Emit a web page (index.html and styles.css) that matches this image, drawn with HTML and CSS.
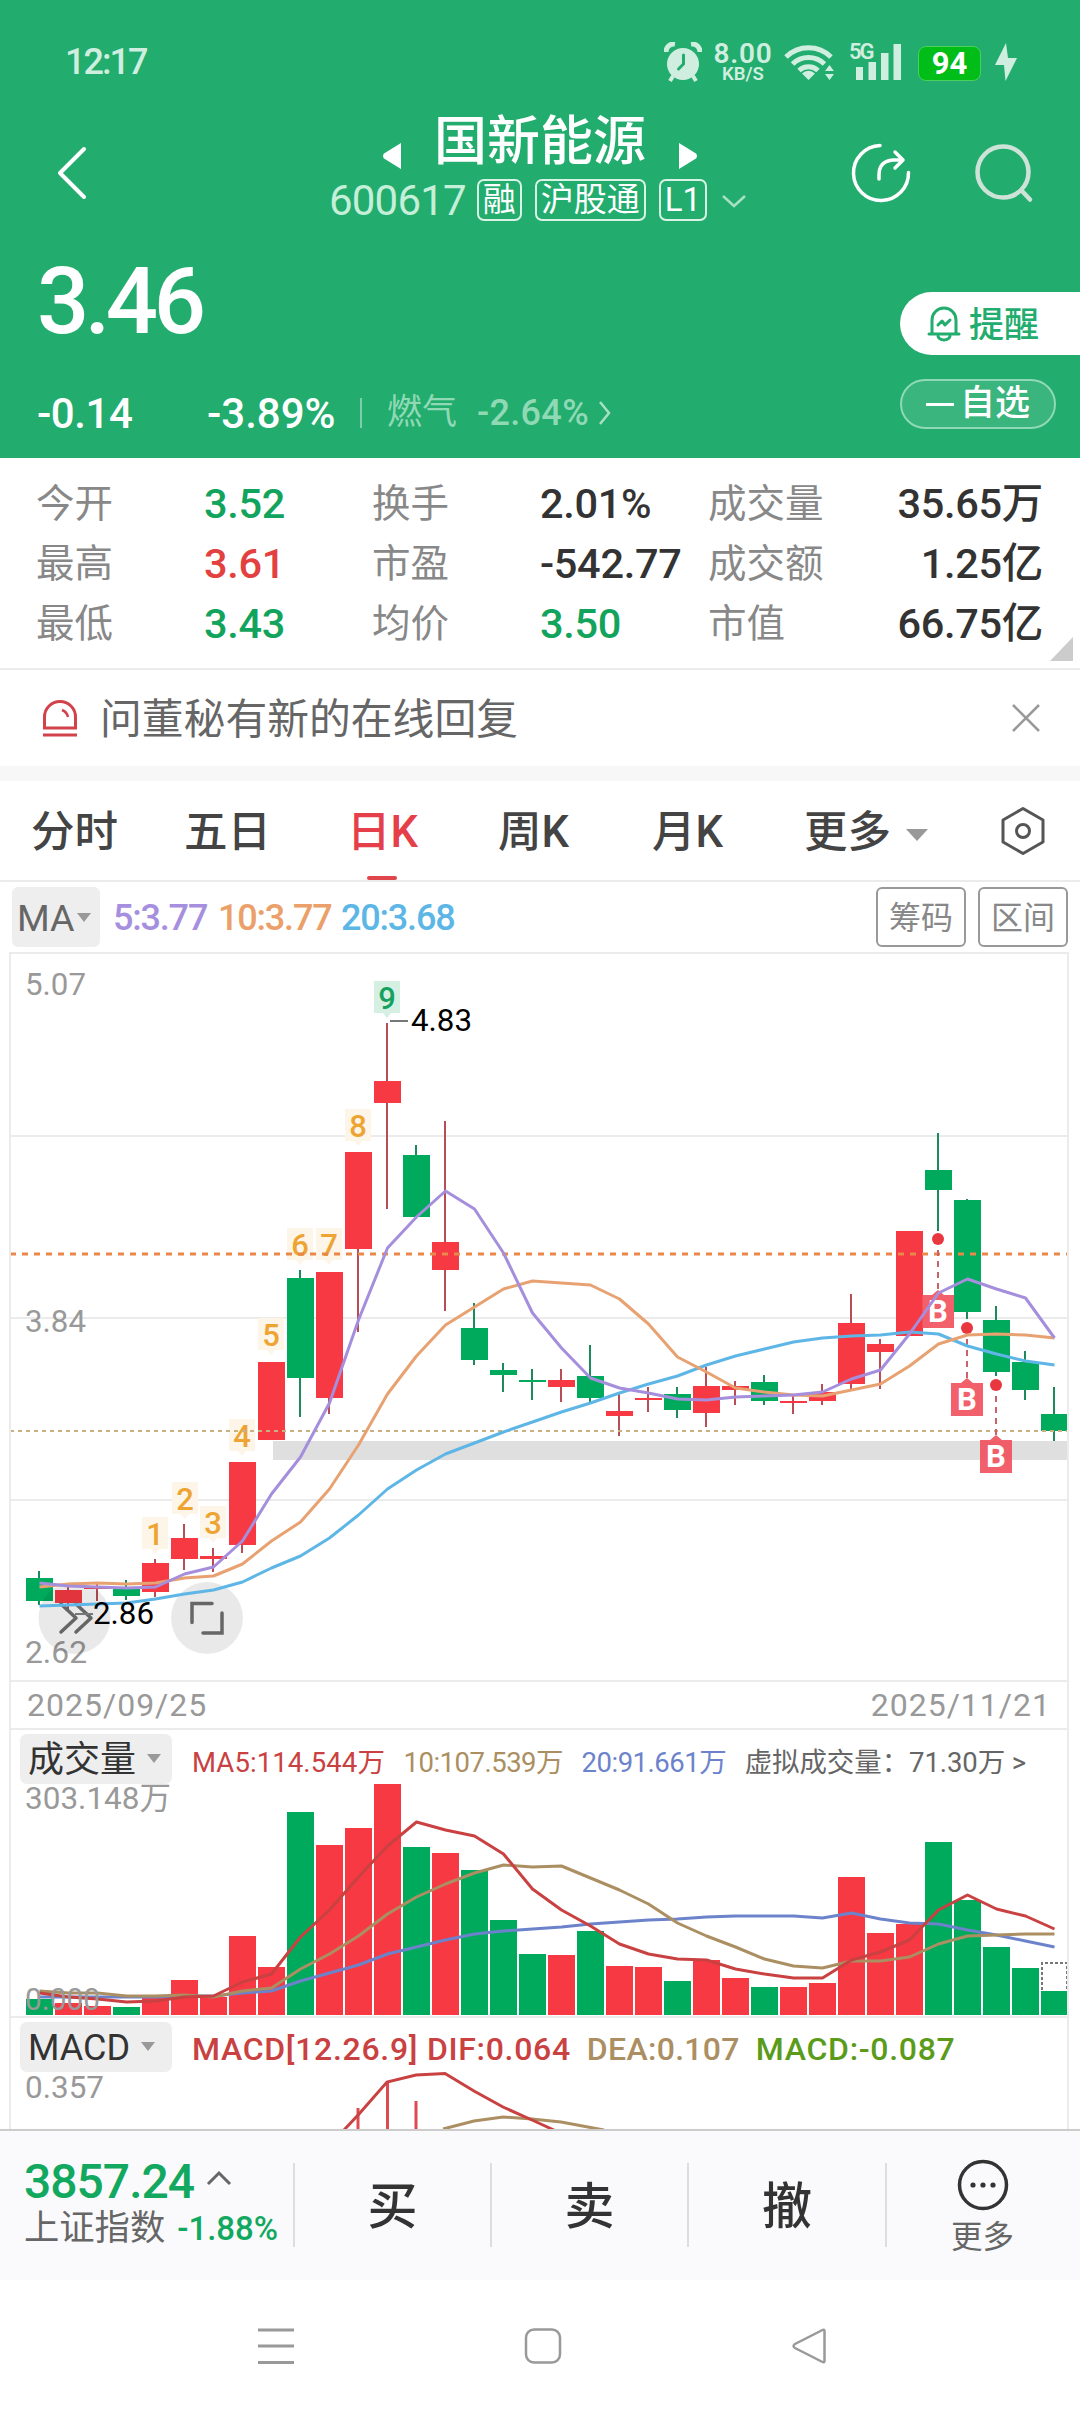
FILE: index.html
```html
<!DOCTYPE html>
<html lang="zh-CN">
<head>
    <meta charset="UTF-8">
    <meta name="viewport" content="width=device-width, initial-scale=1.0">
    <title>国新能源 600617</title>
    <link rel="stylesheet" href="styles.css">
</head>
<body>
    <header class="header">
        <div class="status-bar">
            <span class="clock">12:17</span>
            <div class="status-icons">
                <svg class="ic-alarm" width="38" height="40" viewBox="0 0 38 40">
                    <circle cx="19" cy="22" r="16" fill="#d0eedf"/>
                    <path d="M2 10a8 8 0 0 1 9-8M27 2a8 8 0 0 1 9 8" fill="none" stroke="#d0eedf" stroke-width="5"/>
                    <path d="M9 34l-3 5M29 34l3 5" stroke="#d0eedf" stroke-width="4"/>
                    <path d="M19.500 13v9l-5 5" fill="none" stroke="#22ac6e" stroke-width="3" stroke-linecap="round"/>
                </svg>
                <div class="net-speed"><b>8.00</b><span>KB/S</span></div>
                <svg class="ic-wifi" width="52" height="38" viewBox="0 0 52 38">
                    <g fill="none" stroke="#d0eedf" stroke-width="5">
                        <path d="M2 14a32 32 0 0 1 45 0"/>
                        <path d="M8.500 21a23 23 0 0 1 32 0"/>
                        <path d="M15 27.500a14 14 0 0 1 19 0"/>
                    </g>
                    <path d="M24.500 37l-6.500-6.500a9 9 0 0 1 13 0z" fill="#d0eedf"/>
                    <path d="M41 28l4.500-6 4.500 6zM41 31l4.500 6 4.500-6z" fill="#d0eedf"/>
                </svg>
                <div class="signal">
                    <span>5G</span>
                    <svg width="46" height="38" viewBox="0 0 46 38">
                        <path d="M1 24h7v13h-7zM13.500 19h7.500v18h-7.500zM26 10h7.500v27h-7.500zM38.500 1h7.500v36h-7.500z" fill="#d0eedf"/>
                    </svg>
                </div>
                <span class="battery">94</span>
                <svg class="ic-bolt" width="22" height="40" viewBox="0 0 22 40"><path d="M11 1L0 23h9l1.500 16L22 16h-9z" fill="#d0eedf"/></svg>
            </div>
        </div>

        <div class="title-bar">
            <svg class="back" width="34" height="56" viewBox="0 0 34 56"><path d="M29 4L5 28l24 24" fill="none" stroke="#fff" stroke-width="4" stroke-linecap="round" stroke-linejoin="round"/></svg>
            <div class="stock">
                <div class="stock-name">
                    <svg width="20" height="28" viewBox="0 0 20 28"><path d="M19 1v26L2 16.500q-2-2.500 0-5z" fill="#fff"/></svg>
                    <h1>国新能源</h1>
                    <svg width="20" height="28" viewBox="0 0 20 28"><path d="M1 1v26l17-10.500q2-2.500 0-5z" fill="#fff"/></svg>
                </div>
                <div class="stock-code">
                    <span class="code">600617</span>
                    <span class="tag">融</span>
                    <span class="tag">沪股通</span>
                    <span class="tag">L1</span>
                    <svg width="26" height="14" viewBox="0 0 26 14"><path d="M2 2l11 10L24 2" fill="none" stroke="#a9e0c4" stroke-width="2.500"/></svg>
                </div>
            </div>
            <div class="title-actions">
                <svg width="64" height="64" viewBox="0 0 64 64" fill="none" stroke="#fff" stroke-width="3.500" stroke-linecap="round" stroke-linejoin="round">
                    <path d="M31 4.500a27.500 27.500 0 1 0 28.500 27"/>
                    <path d="M30 38v-4q0-14 14-15h9M46 11l8 8-8 8"/>
                </svg>
                <svg width="64" height="64" viewBox="0 0 64 64" fill="none" stroke="#cde3d7" stroke-width="4.500" stroke-linecap="round">
                    <circle cx="30" cy="31" r="25.500"/>
                    <path d="M49 50l8 8.500"/>
                </svg>
            </div>
        </div>

        <div class="quote">
            <div class="quote-main">
                <div class="price">3.46</div>
                <div class="change">
                    <span class="diff">-0.14</span>
                    <span class="pct">-3.89%</span>
                    <span class="sector">燃气</span>
                    <span class="sector-pct">-2.64%</span>
                    <svg width="14" height="26" viewBox="0 0 14 26"><path d="M2 2l9 11-9 11" fill="none" stroke="#a9e0c4" stroke-width="2.500"/></svg>
                </div>
            </div>
            <div class="quote-actions">
                <button class="remind">
                    <svg width="34" height="36" viewBox="0 0 34 36" fill="none" stroke="#22ac6e" stroke-width="3" stroke-linejoin="round" stroke-linecap="round">
                        <path d="M5 27V14a12 12 0 0 1 24 0v13M2 28h30"/>
                        <path d="M11 30a6 4 0 0 0 12 0" />
                        <path d="M11 19l4-4 3 4 5-5"/>
                    </svg>
                    <span>提醒</span>
                </button>
                <button class="watch"><i></i><span>自选</span></button>
            </div>
        </div>
    </header>

    <section class="stats">
        <span>今开</span><b class="down">3.52</b><span>换手</span><b>2.01%</b><span>成交量</span><b class="end">35.65万</b>
        <span>最高</span><b class="up">3.61</b><span>市盈</span><b>-542.77</b><span>成交额</span><b class="end">1.25亿</b>
        <span>最低</span><b class="down">3.43</b><span>均价</span><b class="down">3.50</b><span>市值</span><b class="end">66.75亿</b>
        <i class="corner"></i>
    </section>

    <section class="notice">
        <svg width="38" height="38" viewBox="0 0 38 38" fill="none" stroke="#d2424a" stroke-width="3">
            <path d="M3.500 29V18a15.500 15.500 0 0 1 31 0v11zM2 36h34"/>
            <path d="M21 11q5 2 6 7" stroke-width="2.500"/>
        </svg>
        <p>问董秘有新的在线回复</p>
        <svg width="30" height="30" viewBox="0 0 30 30"><path d="M2 2l26 26M28 2L2 28" stroke="#999" stroke-width="2.500"/></svg>
    </section>

    <nav class="tabs">
        <span>分时</span>
        <span>五日</span>
        <span class="active">日K</span>
        <span>周K</span>
        <span>月K</span>
        <span>更多<i class="arrow"></i></span>
        <svg width="46" height="50" viewBox="0 0 46 50" fill="none" stroke="#555" stroke-width="3" stroke-linejoin="round">
            <path d="M23 2.500L43 14v22L23 47.500 3 36V14z"/>
            <circle cx="23" cy="25" r="6.500"/>
        </svg>
    </nav>

    <section class="ma-bar">
        <span class="ma-chip">MA<i class="arrow small"></i></span>
        <span class="ma5">5:3.77</span>
        <span class="ma10">10:3.77</span>
        <span class="ma20">20:3.68</span>
        <div class="ma-buttons">
            <button>筹码</button>
            <button>区间</button>
        </div>
    </section>

    <main class="charts">
        <svg id="kline" class="kline" viewBox="11 954 1056 726"></svg>
        <div class="dates"><span>2025/09/25</span><span>2025/11/21</span></div>

        <div class="pane-head">
            <span class="chip">成交量<i class="arrow small"></i></span>
            <div class="legend">
                <span class="red">MA5:114.544万</span>
                <span class="tan">10:107.539万</span>
                <span class="blue">20:91.661万</span>
                <span class="gray">虚拟成交量：71.30万 &gt;</span>
            </div>
        </div>
        <svg id="volume" class="volume" viewBox="11 1784 1056 232"></svg>

        <div class="pane-head">
            <span class="chip">MACD<i class="arrow small"></i></span>
            <div class="legend macd-legend">
                <span class="red">MACD[12.26.9] DIF:0.064</span>
                <span class="tan">DEA:0.107</span>
                <span class="green">MACD:-0.087</span>
            </div>
        </div>
        <svg id="macd" class="macd" viewBox="11 2072 1056 57"></svg>
    </main>

    <footer class="trade-bar">
        <div class="index">
            <div class="index-value">3857.24<svg width="26" height="16" viewBox="0 0 26 16"><path d="M2 14L13 3l11 11" fill="none" stroke="#666" stroke-width="3"/></svg></div>
            <div class="index-name">上证指数<b>-1.88%</b></div>
        </div>
        <div class="trade">买</div>
        <div class="trade">卖</div>
        <div class="trade">撤</div>
        <div class="trade more">
            <svg width="52" height="52" viewBox="0 0 52 52">
                <circle cx="26" cy="26" r="23.500" fill="none" stroke="#333" stroke-width="3.500"/>
                <circle cx="16" cy="26" r="2.600" fill="#333"/><circle cx="26" cy="26" r="2.600" fill="#333"/><circle cx="36" cy="26" r="2.600" fill="#333"/>
            </svg>
            更多
        </div>
    </footer>

    <div class="nav-bar">
        <svg width="38" height="38" viewBox="0 0 38 38"><path d="M1 3h36M1 19h36M1 35.500h36" stroke="#999" stroke-width="3"/></svg>
        <svg width="38" height="38" viewBox="0 0 38 38"><rect x="2" y="2.500" width="34" height="33" rx="8" fill="none" stroke="#999" stroke-width="2.500"/></svg>
        <svg width="38" height="38" viewBox="0 0 38 38"><path d="M33.500 4v30q0 2-2 1L4 21q-3-2 0-4L31.500 3q2-1 2 1z" fill="none" stroke="#999" stroke-width="2.500"/></svg>
    </div>

    <script src="chart.js"></script>
</body>
</html>
```
FILE: styles.css
```css
* {
    margin: 0;
    padding: 0;
    box-sizing: border-box;
}

body {
    width: 1080px;
    height: 2412px;
    overflow: hidden;
    background: #fff;
    color: #333;
    font-family: Roboto, "Noto Sans CJK SC", sans-serif;
}

svg {
    display: block;
    flex: none;
}

button {
    font-family: inherit;
    border: none;
    background: none;
}

i {
    font-style: normal;
}

/* header */
.header {
    height: 458px;
    background: #22ac6e;
    color: #fff;
}

.status-bar {
    height: 104px;
    padding: 42px 63px 0 65px;
    display: flex;
    justify-content: space-between;
    align-items: flex-start;
    color: #d0eedf;
}

.clock {
    font-size: 36px;
    font-weight: 500;
    line-height: 40px;
    letter-spacing: -2px;
}

.status-icons {
    display: flex;
    align-items: flex-start;
}

.net-speed {
    width: 60px;
    margin: 0 11px 0 11px;
    display: flex;
    flex-direction: column;
    align-items: center;
}

.net-speed b {
    font-size: 28px;
    font-weight: 600;
    line-height: 24px;
    letter-spacing: 0.8px;
}

.net-speed span {
    font-size: 18.500px;
    font-weight: 600;
    line-height: 17px;
}

.ic-wifi {
    margin-top: 1px;
}

.signal {
    position: relative;
    width: 46px;
    margin: 1px 17px 0 19px;
}

.signal span {
    position: absolute;
    left: -6px;
    top: -2px;
    font-size: 22px;
    font-weight: 600;
    line-height: 22px;
    letter-spacing: -2px;
}

.battery {
    width: 63px;
    height: 35px;
    margin: 4px 14px 0 0;
    border: 1px solid #4bd05c;
    border-radius: 8px;
    background: #00bd18;
    color: #fff;
    font-size: 31px;
    font-weight: 700;
    line-height: 34px;
    text-align: center;
}

.title-bar {
    height: 136px;
    display: grid;
    grid-template-columns: 300px 1fr 268px;
}

.back {
    margin: 41px 0 0 55px;
}

.stock-name {
    height: 72px;
    display: flex;
    justify-content: center;
    align-items: center;
    gap: 32px;
    margin-right: 32px;
}

.stock-name h1 {
    font-size: 53px;
    font-weight: 500;
    line-height: 72px;
    padding-top: 4px;
}

.stock-name svg {
    margin-top: 32px;
}

.stock-code {
    height: 48px;
    display: flex;
    align-items: center;
    padding-left: 29px;
    gap: 13px;
}

.code {
    font-size: 42px;
    line-height: 48px;
    letter-spacing: -0.8px;
    color: #c5efd8;
    margin-right: -2px;
    padding-top: 2px;
}

.tag {
    height: 42px;
    padding: 0 4px;
    min-width: 45px;
    border: 2px solid #d9f3e6;
    border-radius: 7px;
    font-size: 33px;
    line-height: 37px;
    text-align: center;
}

.stock-code svg {
    margin: 2px 0 0 1px;
}

.title-actions {
    display: flex;
    gap: 60px;
    padding: 37px 0 0 37px;
}

.quote {
    height: 218px;
    display: flex;
    justify-content: space-between;
}

.quote-main {
    padding-left: 37px;
}

.price {
    height: 141px;
    font-size: 92px;
    font-weight: 500;
    line-height: 124px;
    letter-spacing: -4.500px;
}

.change {
    display: flex;
    align-items: center;
    height: 64px;
    font-size: 42px;
}

.diff {
    width: 170px;
    font-weight: 500;
    letter-spacing: -0.4px;
}

.pct {
    width: 153px;
    font-weight: 500;
}

.sector {
    padding-left: 25px;
    border-left: 2px solid #7fceab;
    line-height: 30px;
    font-size: 35px;
    color: #90d9b5;
}

.sector-pct {
    width: 121px;
    margin-left: 20px;
    font-size: 36px;
    font-weight: 500;
    letter-spacing: 0.3px;
    color: #90d9b5;
}

.quote-actions {
    width: 180px;
    padding-top: 52px;
}

.remind {
    width: 180px;
    height: 63px;
    padding-left: 27px;
    display: flex;
    align-items: center;
    gap: 8px;
    border-radius: 32px 0 0 32px;
    background: #fff;
    color: #22ac6e;
    font-size: 35px;
    font-weight: 500;
}

.remind span {
    padding-bottom: 4px;
}

.watch {
    width: 156px;
    height: 50px;
    margin-top: 24px;
    display: flex;
    align-items: center;
    justify-content: center;
    gap: 6px;
    border: 2px solid #8fd9b6;
    border-radius: 25px;
    background: rgba(255, 255, 255, 0.11);
    color: #fff;
    font-size: 35px;
    font-weight: 500;
}

.watch span {
    line-height: 42px;
    padding-bottom: 1px;
}

.watch i {
    width: 28px;
    height: 3px;
    background: #fff;
}

/* stats */
.stats {
    position: relative;
    height: 212px;
    padding: 16px 37px 0 36px;
    display: grid;
    grid-template-columns: 168px 168px 168px 168px 119px 1fr;
    grid-auto-rows: 60px;
    align-content: start;
    border-bottom: 2px solid #ebebeb;
    font-size: 38.500px;
    line-height: 60px;
    color: #888;
    white-space: nowrap;
}

.stats b {
    font-size: 41.500px;
    font-weight: 500;
    letter-spacing: -0.3px;
    color: #333;
}

.stats .up {
    color: #e34040;
}

.stats .down {
    color: #12a35c;
}

.stats .end {
    text-align: right;
}

.corner {
    position: absolute;
    right: 7px;
    bottom: 7px;
    border-left: 23px solid transparent;
    border-bottom: 24px solid #ccc;
}

/* notice */
.notice {
    height: 111px;
    padding: 0 39px 0 41px;
    display: flex;
    align-items: center;
    border-bottom: 15px solid #f7f7f7;
}

.notice p {
    flex: 1;
    padding: 0 0 4px 21px;
    font-size: 41.800px;
    color: #666;
}

/* period tabs */
.tabs {
    height: 101px;
    padding-left: 31px;
    display: grid;
    grid-template-columns: 153px 163px 151px 154px 152px 196px 1fr;
    grid-template-rows: 99px;
    border-bottom: 2px solid #ebebeb;
    font-size: 43.500px;
    line-height: 103px;
    color: #444;
    font-weight: 500;
}

.tabs svg {
    margin-top: 25px;
}

.tabs .active {
    position: relative;
    color: #e5404a;
}

.tabs .active::after {
    content: '';
    position: absolute;
    left: 20px;
    bottom: 0;
    width: 30px;
    height: 4px;
    border-radius: 2px;
    background: #e0454c;
}

.arrow {
    display: inline-block;
    margin-left: 15px;
    vertical-align: 6px;
    border: 11px solid transparent;
    border-top: 12px solid #999;
    border-bottom: 0;
}

.arrow.small {
    border-width: 9px 7px 0;
    margin-left: 11px;
    vertical-align: 9px;
}

/* ma bar */
.ma-bar {
    height: 70px;
    padding: 5px 12px 0;
    display: flex;
    font-size: 36px;
    line-height: 62px;
    letter-spacing: -1.2px;
    font-weight: 500;
}

.ma-chip {
    width: 88px;
    height: 60px;
    margin-right: 13px;
    padding-left: 5px;
    border-radius: 6px;
    background: #eee;
    color: #666;
    font-size: 37.500px;
    font-weight: 400;
    letter-spacing: 0;
    white-space: nowrap;
}

.ma-chip .arrow.small {
    margin-left: 2px;
}

.ma5 {
    width: 105px;
    color: #a68fdf;
}

.ma10 {
    width: 123px;
    color: #eba069;
}

.ma20 {
    color: #5cb6e6;
}

.ma-buttons {
    display: flex;
    gap: 12px;
    margin-left: auto;
}

.ma-buttons button {
    width: 90px;
    height: 60px;
    padding-bottom: 4px;
    border: 2px solid #999;
    border-radius: 6px;
    font-size: 32px;
    color: #888;
}

/* charts */
.charts {
    height: 1177px;
    margin: 0 11px 0 9px;
    overflow: hidden;
    border: 2px solid #ebebeb;
    border-bottom: 0;
}

.kline,
.volume,
.macd {
    width: 1056px;
}

.kline {
    height: 726px;
}

.volume {
    height: 232px;
    overflow: visible;
}

.macd {
    height: 57px;
    overflow: visible;
}

.dates {
    height: 50px;
    padding: 0 16px 0 16px;
    display: flex;
    justify-content: space-between;
    border-top: 2px solid #ebebeb;
    border-bottom: 2px solid #ebebeb;
    font-size: 32px;
    line-height: 47px;
    letter-spacing: 1px;
    color: #999;
}

.pane-head {
    height: 54px;
    padding: 4px 0 0 9px;
    display: flex;
}

.volume + .pane-head {
    height: 56px;
    border-top: 2px solid #ebebeb;
}

.chip {
    width: 152px;
    height: 50px;
    padding-left: 8px;
    border-radius: 7px;
    background: #eee;
    color: #333;
    font-size: 36px;
    line-height: 52px;
    white-space: nowrap;
}

.legend {
    display: flex;
    gap: 18.500px;
    padding-left: 20px;
    font-size: 27.500px;
    line-height: 57px;
    letter-spacing: -0.5px;
    white-space: nowrap;
}

.legend .red {
    letter-spacing: 0.1px;
}

.legend .gray {
    letter-spacing: -0.1px;
}

.macd-legend {
    gap: 16px;
    font-size: 32px;
    line-height: 54px;
    letter-spacing: 0.3px;
    font-weight: 500;
}

.macd-legend .red,
.macd-legend .green {
    letter-spacing: 0.7px;
}

.red {
    color: #c94141;
}

.tan {
    color: #ab8f62;
}

.blue {
    color: #6c83cc;
}

.gray {
    color: #666;
}

.green {
    color: #5b9b1a;
}

svg text {
    font-family: Roboto, "Noto Sans CJK SC", sans-serif;
    font-size: 32px;
}

.axis {
    fill: #999;
}

.peak {
    fill: #000;
}

.seq {
    font-size: 31px;
    font-weight: 500;
    text-anchor: middle;
    fill: #eda433;
}

.seq.nine {
    fill: #16a160;
}

.buy {
    font-size: 31px;
    font-weight: 700;
    text-anchor: middle;
    fill: #fff;
}

/* trade bar */
.trade-bar {
    height: 151px;
    display: grid;
    grid-template-columns: 293px 197px 197px 198px 1fr;
    border-top: 2px solid #ccc;
    background: #fafafc;
}

.index {
    padding: 27px 0 0 24px;
    white-space: nowrap;
}

.index-value {
    display: flex;
    gap: 12px;
    font-size: 48px;
    font-weight: 500;
    line-height: 48px;
    letter-spacing: -1px;
    color: #12a860;
}

.index-value svg {
    margin-top: 12px;
}

.index-name {
    font-size: 35.300px;
    line-height: 45px;
    color: #666;
}

.index-name b {
    margin-left: 12px;
    font-size: 33px;
    font-weight: 500;
    color: #12a860;
}

.trade {
    height: 84px;
    margin-top: 32px;
    border-left: 2px solid #ddd;
    font-size: 50px;
    font-weight: 500;
    line-height: 88px;
    text-align: center;
    color: #333;
}

.more {
    display: flex;
    flex-direction: column;
    align-items: center;
    padding-right: 2px;
    font-size: 31.500px;
    font-weight: 400;
    line-height: 54px;
    color: #666;
}

.more svg {
    margin-top: -4px;
}

/* system navigation */
.nav-bar {
    height: 132px;
    padding: 47px 251px 0 257px;
    display: flex;
    justify-content: space-between;
}
```
FILE: chart.js
```js
const RED = '#f73943';
const GREEN = '#00aa5d';
const STEP = 29;
const X0 = 39.5;

const x = i => X0 + STEP * i;

// [up, high, body top, body bottom, low]
const candles = [
    [0, 1571, 1578, 1601, 1605], [1, 1583, 1590, 1603, 1610], [1, 1582, 1587, 1589, 1601],
    [0, 1580, 1587, 1596, 1600], [1, 1559, 1563, 1592, 1597], [1, 1524, 1538, 1559, 1570],
    [1, 1548, 1556, 1559, 1572], [1, 1462, 1462, 1545, 1553], [1, 1362, 1362, 1440, 1440],
    [0, 1270, 1278, 1378, 1417], [1, 1272, 1272, 1398, 1414], [1, 1152, 1152, 1249, 1332],
    [1, 1023, 1081, 1103, 1209], [0, 1145, 1155, 1217, 1217], [1, 1121, 1242, 1270, 1311],
    [0, 1303, 1328, 1360, 1365], [0, 1363, 1370, 1375, 1392], [0, 1369, 1380, 1382, 1400],
    [1, 1369, 1380, 1387, 1402], [0, 1345, 1376, 1398, 1402], [1, 1394, 1411, 1416, 1436],
    [1, 1387, 1398, 1400, 1412], [0, 1387, 1394, 1410, 1418], [1, 1367, 1386, 1413, 1427],
    [1, 1381, 1386, 1390, 1405], [0, 1375, 1382, 1401, 1405], [1, 1395, 1401, 1403, 1414],
    [1, 1384, 1392, 1401, 1405], [1, 1294, 1323, 1384, 1390], [1, 1339, 1344, 1352, 1389],
    [1, 1231, 1231, 1336, 1336], [0, 1133, 1170, 1190, 1231], [0, 1199, 1200, 1312, 1319],
    [0, 1306, 1320, 1372, 1376], [0, 1351, 1362, 1390, 1400], [0, 1387, 1414, 1431, 1441]
];

const ma5 = [1583, 1586, 1587, 1588, 1587, 1574, 1567, 1541, 1494, 1457, 1403, 1320, 1248, 1217, 1191, 1209, 1253, 1313, 1348, 1378, 1388, 1393, 1399, 1400, 1397, 1396, 1395, 1392, 1379, 1370, 1334, 1293, 1279, 1289, 1298, 1338];
const ma10 = [1587, 1584, 1583, 1584, 1583, 1578, 1576, 1564, 1541, 1522, 1489, 1445, 1394, 1356, 1325, 1307, 1289, 1281, 1283, 1285, 1299, 1324, 1357, 1372, 1388, 1392, 1395, 1396, 1390, 1384, 1366, 1344, 1335, 1334, 1335, 1338];
const ma20 = [1606, 1605, 1604, 1603, 1599, 1594, 1590, 1582, 1568, 1556, 1538, 1515, 1489, 1470, 1454, 1443, 1432, 1422, 1412, 1403, 1393, 1384, 1376, 1365, 1356, 1349, 1342, 1338, 1336, 1335, 1332, 1334, 1346, 1354, 1361, 1365];

const vol = [1999, 2003, 2006, 2007, 1998, 1980, 1997, 1936, 1967, 1812, 1845, 1828, 1784, 1847, 1853, 1870, 1920, 1954, 1955, 1931, 1966, 1967, 1981, 1960, 1978, 1987, 1987, 1983, 1877, 1933, 1924, 1842, 1900, 1947, 1968, 1991];
const vol5 = [1993, 1997, 1999, 2002, 2001, 1997, 1996, 1982, 1974, 1937, 1910, 1877, 1846, 1822, 1830, 1836, 1854, 1889, 1910, 1926, 1944, 1954, 1959, 1960, 1969, 1974, 1978, 1978, 1960, 1952, 1940, 1910, 1895, 1909, 1916, 1929];
const vol10 = [1991, 1993, 1993, 1996, 1996, 1995, 1997, 1991, 1988, 1969, 1954, 1936, 1914, 1897, 1884, 1873, 1865, 1867, 1866, 1878, 1890, 1904, 1923, 1936, 1947, 1959, 1966, 1968, 1961, 1961, 1957, 1944, 1936, 1935, 1934, 1934];
const vol20 = [1997, 1997, 1997, 1997, 1997, 1996, 1996, 1993, 1991, 1981, 1973, 1965, 1954, 1947, 1940, 1934, 1931, 1929, 1927, 1924, 1922, 1920, 1919, 1917, 1916, 1916, 1916, 1918, 1913, 1919, 1923, 1924, 1930, 1935, 1941, 1947];

// [digit, x, top of the label]
const sequence = [[1, 155, 1517], [2, 185, 1482], [3, 213, 1506], [4, 242, 1419], [5, 271, 1318], [6, 300, 1228], [7, 329, 1228], [8, 358, 1109], [9, 387, 981]];

// [x, dot y, top of the B label]
const buys = [[938, 1239, 1295], [967, 1328, 1383], [996, 1385, 1440]];

const line = (values, color, width = 3) =>
    `<polyline points="${values.map((v, i) => `${x(i)},${v}`).join(' ')}" fill="none" stroke="${color}" stroke-width="${width}" stroke-linejoin="round"/>`;

const hline = (y, color, dash, width) =>
    `<path d="M10 ${y}H1069" stroke="${color}" stroke-width="${width}" stroke-dasharray="${dash}"/>`;

const label = (cls, tx, ty, width, text) =>
    `<text class="${cls}" x="${tx}" y="${ty}" textLength="${width}" lengthAdjust="spacingAndGlyphs">${text}</text>`;

function drawKline() {
    let out = '';
    [1136, 1318, 1500].forEach(y => out += hline(y, '#ebebeb', 'none', 2));
    out += '<rect x="273" y="1441" width="796" height="19" fill="#dfdfdf"/>';
    out += label('axis', 25, 995, 61, '5.07') + label('axis', 25, 1332, 61, '3.84') + label('axis', 25, 1663, 62, '2.62');

    candles.forEach(([up, high, top, bottom, low], i) => {
        const wick = up ? '#b94d55' : '#1c8a5a';
        out += `<path d="M${x(i) - 0.5} ${high}V${low}" stroke="${wick}" stroke-width="2"/>`;
        out += `<rect x="${x(i) - 13.5}" y="${top}" width="27" height="${bottom - top}" fill="${up ? RED : GREEN}"/>`;
    });

    sequence.forEach(([n, cx, y]) => {
        const bg = n === 9 ? '#d5f0e3' : '#fef5e9';
        out += `<path d="M${cx - 13} ${y}h26v32h-9l-4 5-4-5h-9z" fill="${bg}"/>`;
        out += `<text class="seq${n === 9 ? ' nine' : ''}" x="${cx}" y="${y + 28}">${n}</text>`;
    });

    out += hline(1254, '#e9884a', '6 6', 3);
    out += hline(1431, '#c9b183', '4 4', 2);

    // floating controls
    out += '<circle cx="74.5" cy="1618" r="36" fill="#000" fill-opacity=".085"/><circle cx="207" cy="1618" r="36" fill="#000" fill-opacity=".085"/>';
    out += '<path d="M61 1604l15 14-15 14M76 1604l15 14-15 14" fill="none" stroke="#666" stroke-width="3.500" stroke-linecap="round" stroke-linejoin="round"/>';
    out += '<path d="M212 1603.500h-20v19M222 1613v20h-19" fill="none" stroke="#666" stroke-width="3.500" stroke-linecap="round"/>';

    buys.forEach(([cx, dot, y]) => {
        out += `<circle cx="${cx}" cy="${dot}" r="6" fill="#e93740"/>`;
        out += `<path d="M${cx} ${dot + 11}V${y - 4}" stroke="#c9626a" stroke-width="2" stroke-dasharray="6 5"/>`;
        out += `<path d="M${cx - 16} ${y}h10l6-5 6 5h10v33h-32z" fill="#f1505b" fill-opacity=".9"/>`;
        out += `<text class="buy" x="${cx}" y="${y + 27}">B</text>`;
    });

    out += line(ma20, '#5eb6e6') + line(ma10, '#e8a271') + line(ma5, '#a58fdc');

    out += '<path d="M390 1021h18M75 1614h18" stroke="#777" stroke-width="2"/>';
    out += label('peak', 411, 1031, 61, '4.83') + label('peak', 93, 1624, 61, '2.86');
    document.getElementById('kline').innerHTML = out;
}

function drawVolume() {
    let out = '';
    vol.forEach((top, i) => {
        out += `<rect x="${x(i) - 13.5}" y="${top}" width="27" height="${2015 - top}" fill="${candles[i][0] ? RED : GREEN}"/>`;
    });
    out += '<path d="M1042 1990v-27h25v27" fill="none" stroke="#777" stroke-width="2" stroke-dasharray="3 2"/>';
    out += line(vol20, '#6c83cc') + line(vol10, '#ab8f62') + line(vol5, '#c94141');
    out += label('axis', 25, 1809, 146, '303.148万') + label('axis', 25, 2010, 75, '0.000');
    document.getElementById('volume').innerHTML = out;
}

function drawMacd() {
    let out = '<path d="M358 2108v22M387.500 2082v48M416 2101v29" stroke="#dd4a50" stroke-width="3"/>';
    out += '<polyline points="443,2129 474,2121 503,2117 532,2119 561,2122 604,2130" fill="none" stroke="#ab8f62" stroke-width="3"/>';
    out += '<polyline points="344,2130 359,2114 387,2082 416,2075 445,2073.500 474,2091 503,2107 532,2120 554,2130" fill="none" stroke="#c94141" stroke-width="3"/>';
    out += label('axis', 25, 2098, 79, '0.357');
    document.getElementById('macd').innerHTML = out;
}

drawKline();
drawVolume();
drawMacd();
```
